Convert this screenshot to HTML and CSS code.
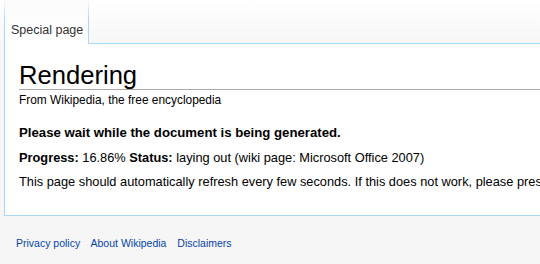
FILE: index.html
```html
<!DOCTYPE html>
<html>
<head>
    <meta charset="UTF-8">
    <title>Rendering - Wikipedia</title>
    <link rel="stylesheet" href="styles.css">
</head>
<body>

    <div class="page">
        <div class="head">
            <div class="tab">Special page</div>
            <div class="filler"></div>
        </div>

        <div class="content">
            <h1>Rendering</h1>
            <div class="sub">From Wikipedia, the free encyclopedia</div>

            <p class="wait">Please wait while the document is being generated.</p>
            <p><b>Progress:</b> 16.86% <b>Status:</b> laying out (wiki page: Microsoft Office 2007)</p>
            <p>This page should automatically refresh every few seconds. If this does not work, please press the refresh button of your browser.</p>
        </div>

        <div class="footer">
            <a href="#">Privacy policy</a>
            <a href="#">About Wikipedia</a>
            <a href="#">Disclaimers</a>
        </div>
    </div>

</body>
</html>
```

FILE: styles.css
```css
html {
    overflow: hidden;
}
body {
    margin: 0;
    font-family: "Liberation Sans", Arial, sans-serif;
    background: #f6f6f6;
    color: #000;
}
.page {
    width: 800px;
    padding-left: 4px;
}
.head {
    display: flex;
    height: 44px;
    background: linear-gradient(#fff, #f6f6f6);
    margin-left: -4px;
    padding-left: 4px;
}
.tab {
    display: flex;
    align-items: flex-end;
    box-sizing: border-box;
    height: 44px;
    padding: 0 5px 6px 6px;
    font-size: 12.5px;
    line-height: 16px;
    color: #333;
    background: linear-gradient(#fbfbfb, #fff);
    border-style: solid;
    border-width: 0 1px;
    border-image: linear-gradient(rgba(167, 215, 249, 0), #a7d7f9 45%) 1;
}
.filler {
    flex: 1;
    border-bottom: 1px solid #a7d7f9;
}
.content {
    background: #fff;
    border-left: 1px solid #a7d7f9;
    border-bottom: 1px solid #a7d7f9;
    padding: 17px 0 20px 14px;
}
h1 {
    margin: 0;
    font-size: 25.6px;
    line-height: 28px;
    font-weight: normal;
    border-bottom: 1px solid #aaa;
}
.sub {
    margin-top: 3px;
    font-size: 11.9px;
    line-height: 15px;
}
p {
    margin: 0;
    font-size: 12.8px;
    line-height: 24.5px;
    white-space: nowrap;
}
.wait {
    margin-top: 13px;
    font-weight: bold;
    font-size: 13.2px;
}
.footer {
    padding: 20px 0 0 12px;
    font-size: 10.5px;
    line-height: 14px;
}
.footer a {
    color: #0645ad;
    text-decoration: none;
    margin-right: 8px;
}
```
